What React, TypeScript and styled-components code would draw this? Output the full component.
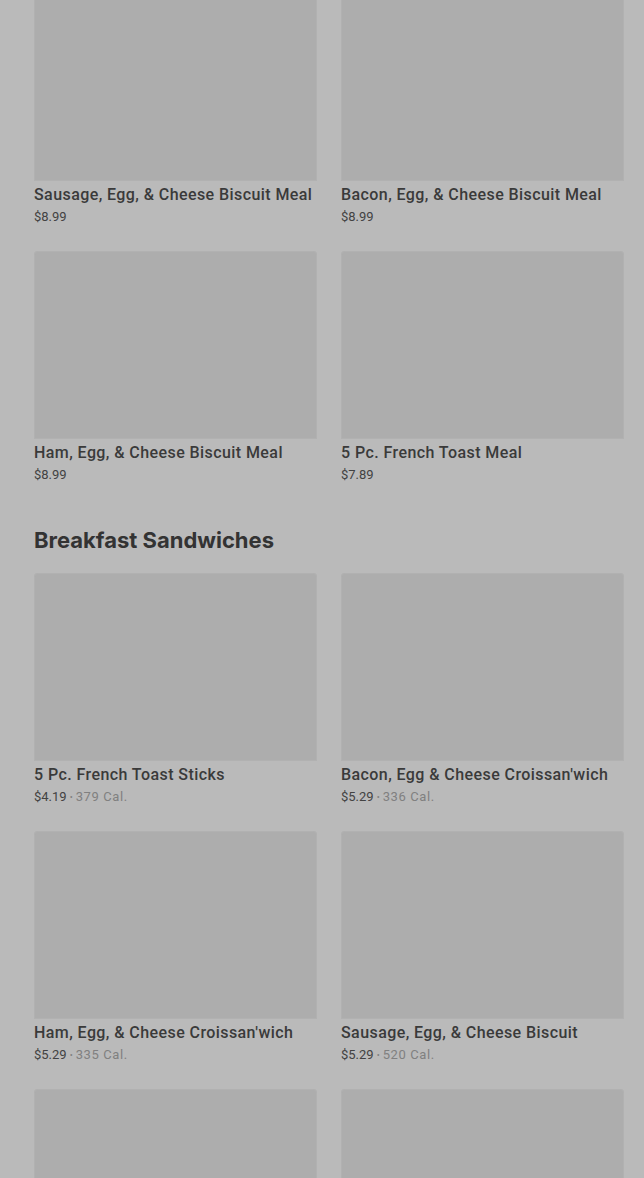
import React from 'react';
import styled, { createGlobalStyle } from 'styled-components';

interface Item {
  name: string;
  price: string;
  cal?: string;
}

const GlobalStyle = createGlobalStyle`
  html, body {
    margin: 0;
    padding: 0;
    background-color: #bababa;
  }
  body {
    font-family: Roboto, "Liberation Sans", Arial, sans-serif;
    overflow: hidden;
  }
`;

const Page = styled.div`
  width: 644px;
  height: 1178px;
  overflow: hidden;
  background-color: #bababa;
  box-sizing: border-box;
  padding: 0 20px 0 34px;
`;

// the list is scrolled a little, so the first row's pictures start above the top
const Scroller = styled.div`
  margin-top: -7px;
`;

const Grid = styled.div`
  display: grid;
  grid-template-columns: 283px 283px;
  column-gap: 24px;
`;

const Card = styled.div`
  height: 258px;
  display: flex;
  flex-direction: column;
`;

const Thumb = styled.div`
  height: 188px;
  background-color: #adadad;
  border-radius: 4px 4px 0 0;
  box-shadow: inset 0 0 0 1px #b1b1b1;
`;

const Name = styled.div`
  margin-top: 3px;
  font-size: 16px;
  line-height: 22px;
  font-weight: 500;
  color: #3a3a3a;
  letter-spacing: 0.42px;
  white-space: nowrap;
`;

const Meta = styled.div`
  margin-top: 2px;
  font-size: 13px;
  line-height: 18px;
  color: #424242;
  letter-spacing: 0;
`;

const Cal = styled.span`
  color: #808080;
  letter-spacing: 0.6px;
`;

const Dot = styled.span`
  color: #808080;
  margin: 0 3px;
  font-size: 9px;
  vertical-align: 1px;
`;

const Heading = styled.h2`
  margin: 0;
  padding: 18px 0 20px;
  font-family: Inter, "Noto Sans", sans-serif;
  font-size: 22px;
  line-height: 26px;
  font-weight: 700;
  letter-spacing: 0;
  color: #333333;
`;

const meals: Item[] = [
  { name: 'Sausage, Egg, & Cheese Biscuit Meal', price: '$8.99' },
  { name: 'Bacon, Egg, & Cheese Biscuit Meal', price: '$8.99' },
  { name: 'Ham, Egg, & Cheese Biscuit Meal', price: '$8.99' },
  { name: '5 Pc. French Toast Meal', price: '$7.89' },
];

const sandwiches: Item[] = [
  { name: '5 Pc. French Toast Sticks', price: '$4.19', cal: '379 Cal.' },
  { name: "Bacon, Egg & Cheese Croissan'wich", price: '$5.29', cal: '336 Cal.' },
  { name: "Ham, Egg, & Cheese Croissan'wich", price: '$5.29', cal: '335 Cal.' },
  { name: 'Sausage, Egg, & Cheese Biscuit', price: '$5.29', cal: '520 Cal.' },
];

const ItemCard: React.FC<{ item?: Item }> = ({ item }) => (
  <Card>
    <Thumb />
    {item && (
      <>
        <Name>{item.name}</Name>
        <Meta>
          {item.price}
          {item.cal && (
            <>
              <Dot>•</Dot>
              <Cal>{item.cal}</Cal>
            </>
          )}
        </Meta>
      </>
    )}
  </Card>
);

const App: React.FC = () => (
  <>
    <GlobalStyle />
    <Page>
      <Scroller>
        <Grid>
          {meals.map((m) => (
            <ItemCard key={m.name} item={m} />
          ))}
        </Grid>
        <Heading>Breakfast Sandwiches</Heading>
        <Grid>
          {sandwiches.map((s) => (
            <ItemCard key={s.name} item={s} />
          ))}
          <ItemCard />
          <ItemCard />
        </Grid>
      </Scroller>
    </Page>
  </>
);

export default App;
